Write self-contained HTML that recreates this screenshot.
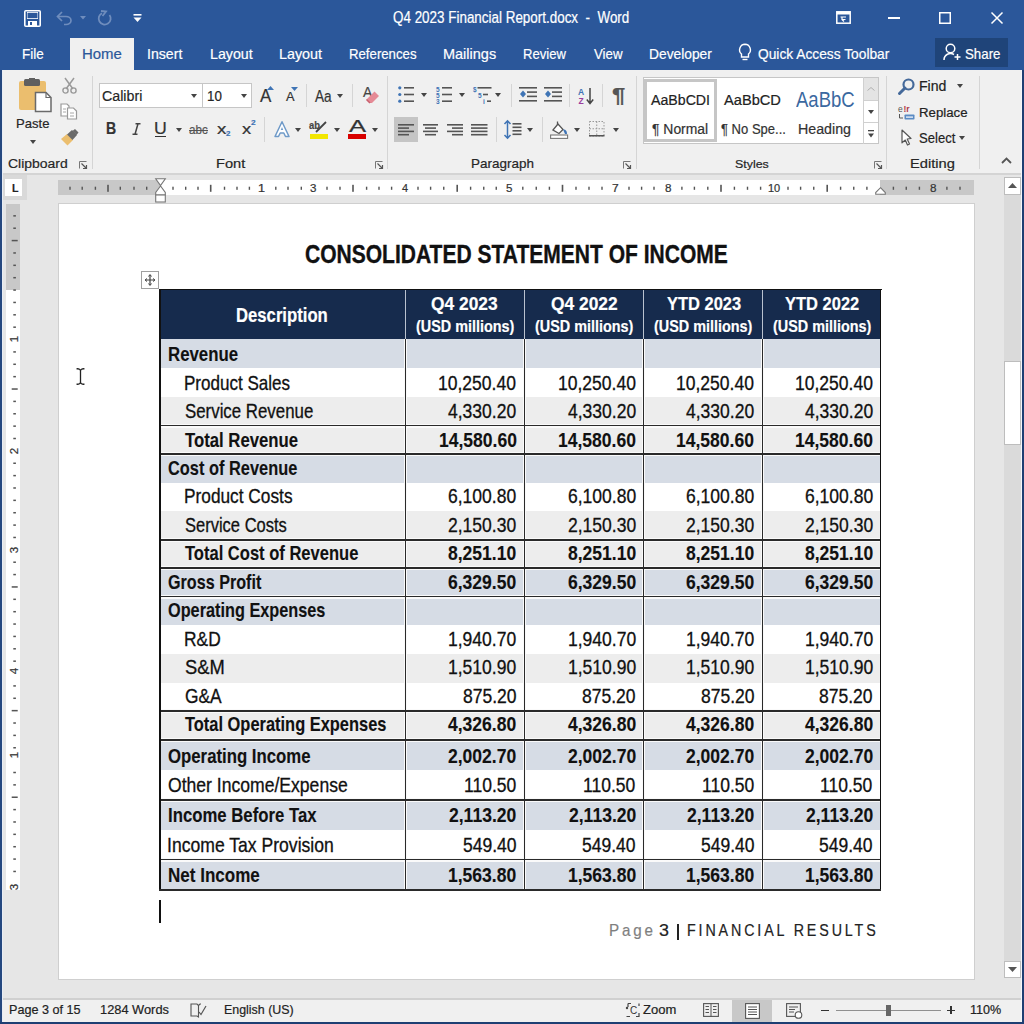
<!DOCTYPE html>
<html><head><meta charset="utf-8"><style>
html,body{margin:0;padding:0;}
body{width:1024px;height:1024px;overflow:hidden;position:relative;background:#E6E6E6;font-family:"Liberation Sans",sans-serif;}
.t{position:absolute;white-space:pre;line-height:0;transform-origin:0 0;-webkit-text-stroke-width:0.2px;}
svg{overflow:visible}
</style></head><body>
<div style="position:absolute;left:0px;top:0px;width:1024px;height:70px;background:#2B579A;"></div>
<div style="position:absolute;left:70px;top:38px;width:64px;height:33px;background:#F0F0F0;"></div>
<div style="position:absolute;left:935px;top:38px;width:73px;height:29px;background:#1F4479;"></div>
<div style="position:absolute;left:0px;top:70px;width:1024px;height:103px;background:#F0F0F0;"></div>
<div style="position:absolute;left:0px;top:173px;width:1024px;height:2px;background:#D4D4D4;"></div>
<div class="t" style="left:393.15px;top:18.23px;font-size:15.92px;font-weight:normal;color:#FFFFFF;transform:scaleX(0.8440);">Q4 2023 Financial Report.docx  -  Word</div>
<div class="t" style="left:21.92px;top:53.66px;font-size:15.41px;font-weight:normal;color:#FFFFFF;transform:scaleX(0.8742);">File</div>
<div class="t" style="left:147.48px;top:53.66px;font-size:15.41px;font-weight:normal;color:#FFFFFF;transform:scaleX(0.9162);">Insert</div>
<div class="t" style="left:209.76px;top:53.66px;font-size:15.41px;font-weight:normal;color:#FFFFFF;transform:scaleX(0.9218);">Layout</div>
<div class="t" style="left:279.25px;top:53.66px;font-size:15.41px;font-weight:normal;color:#FFFFFF;transform:scaleX(0.9307);">Layout</div>
<div class="t" style="left:348.94px;top:53.66px;font-size:15.41px;font-weight:normal;color:#FFFFFF;transform:scaleX(0.8568);">References</div>
<div class="t" style="left:442.54px;top:53.66px;font-size:15.41px;font-weight:normal;color:#FFFFFF;transform:scaleX(0.9403);">Mailings</div>
<div class="t" style="left:522.96px;top:53.66px;font-size:15.41px;font-weight:normal;color:#FFFFFF;transform:scaleX(0.8478);">Review</div>
<div class="t" style="left:593.83px;top:53.66px;font-size:15.41px;font-weight:normal;color:#FFFFFF;transform:scaleX(0.8624);">View</div>
<div class="t" style="left:649.40px;top:53.66px;font-size:15.41px;font-weight:normal;color:#FFFFFF;transform:scaleX(0.8950);">Developer</div>
<div class="t" style="left:758.28px;top:53.66px;font-size:15.41px;font-weight:normal;color:#FFFFFF;transform:scaleX(0.8935);">Quick Access Toolbar</div>
<div class="t" style="left:965.20px;top:53.66px;font-size:15.41px;font-weight:normal;color:#FFFFFF;transform:scaleX(0.8620);">Share</div>
<div class="t" style="left:81.80px;top:53.66px;font-size:15.41px;font-weight:normal;color:#2B579A;transform:scaleX(0.9710);">Home</div>
<svg style="position:absolute;left:24px;top:10px;" width="17" height="17" viewBox="0 0 17 17"><rect x="0.8" y="0.8" width="15.4" height="15.4" rx="1" fill="none" stroke="#fff" stroke-width="1.6"/><rect x="3" y="2" width="11" height="7" fill="#fff"/><rect x="3.5" y="2.8" width="10" height="5.4" fill="#2B579A"/><rect x="4" y="11" width="9" height="5" fill="#fff"/><rect x="6" y="12" width="2" height="3" fill="#2B579A"/></svg>
<svg style="position:absolute;left:56px;top:11px;" width="17" height="14" viewBox="0 0 17 14"><path d="M6 1 L1.5 5.5 L6 10" fill="none" stroke="#6F8DBD" stroke-width="1.7"/><path d="M2 5.5 H10 A5 4 0 0 1 10 13.5 H8" fill="none" stroke="#6F8DBD" stroke-width="1.7"/></svg>
<svg style="position:absolute;left:80px;top:16px;" width="6" height="4" viewBox="0 0 6 4"><path d="M0 0 H6 L3 3.5 Z" fill="#6F8DBD"/></svg>
<svg style="position:absolute;left:97px;top:11px;" width="16" height="15" viewBox="0 0 16 15"><path d="M12.5 4 A6 6 0 1 1 5 2.2" fill="none" stroke="#6F8DBD" stroke-width="1.8"/><path d="M4 0 L9 0.5 L5.5 5" fill="none" stroke="#6F8DBD" stroke-width="1.8"/></svg>
<svg style="position:absolute;left:133px;top:14px;" width="9" height="9" viewBox="0 0 9 9"><rect x="0.5" y="0" width="8" height="1.6" fill="#fff"/><path d="M0.5 3.5 H8.5 L4.5 8 Z" fill="#fff"/></svg>
<svg style="position:absolute;left:836px;top:11px;" width="15" height="13" viewBox="0 0 15 13"><rect x="0.8" y="0.8" width="13.4" height="11.4" fill="none" stroke="#fff" stroke-width="1.5"/><rect x="1" y="1" width="13" height="2.5" fill="#fff"/><path d="M4.5 6 H10 M6 6 V8.5 H9.5 M6 8.5 L8 10.5" stroke="#fff" stroke-width="1.2" fill="none"/></svg>
<div style="position:absolute;left:888px;top:17px;width:12px;height:2px;background:#FFFFFF;"></div>
<svg style="position:absolute;left:939px;top:12px;" width="12" height="12" viewBox="0 0 12 12"><rect x="0.75" y="0.75" width="10.5" height="10.5" fill="none" stroke="#fff" stroke-width="1.5"/></svg>
<svg style="position:absolute;left:991px;top:12px;" width="12" height="12" viewBox="0 0 12 12"><path d="M0.5 0.5 L11.5 11.5 M11.5 0.5 L0.5 11.5" stroke="#fff" stroke-width="1.5"/></svg>
<svg style="position:absolute;left:738px;top:43px;" width="14" height="19" viewBox="0 0 14 19"><path d="M7 1.2 A5.6 5.6 0 0 0 3.5 11 V14 H10.5 V11 A5.6 5.6 0 0 0 7 1.2 Z" fill="none" stroke="#fff" stroke-width="1.4"/><path d="M4.5 16.5 H9.5" stroke="#fff" stroke-width="1.4"/></svg>
<svg style="position:absolute;left:943px;top:43px;" width="19" height="18" viewBox="0 0 19 18"><circle cx="7.5" cy="5.5" r="4.3" fill="none" stroke="#fff" stroke-width="1.5"/><path d="M1 17 A6.5 6.5 0 0 1 11 11.5" fill="none" stroke="#fff" stroke-width="1.5"/><path d="M14.5 11 V17 M11.5 14 H17.5" stroke="#fff" stroke-width="1.5"/></svg>
<div style="position:absolute;left:92px;top:76px;width:1px;height:93px;background:#D5D5D5;"></div>
<div style="position:absolute;left:387px;top:76px;width:1px;height:93px;background:#D5D5D5;"></div>
<div style="position:absolute;left:636px;top:76px;width:1px;height:93px;background:#D5D5D5;"></div>
<div style="position:absolute;left:886px;top:76px;width:1px;height:93px;background:#D5D5D5;"></div>
<div style="position:absolute;left:979px;top:76px;width:1px;height:93px;background:#D5D5D5;"></div>
<div class="t" style="left:8.10px;top:163.96px;font-size:13.66px;font-weight:normal;color:#262626;transform:scaleX(1.0227);">Clipboard</div>
<div class="t" style="left:215.83px;top:164.06px;font-size:13.37px;font-weight:normal;color:#262626;transform:scaleX(1.0934);">Font</div>
<div class="t" style="left:470.92px;top:164.06px;font-size:13.37px;font-weight:normal;color:#262626;transform:scaleX(1.0081);">Paragraph</div>
<div class="t" style="left:734.64px;top:163.52px;font-size:11.77px;font-weight:normal;color:#262626;transform:scaleX(1.0533);">Styles</div>
<div class="t" style="left:910.42px;top:164.06px;font-size:13.37px;font-weight:normal;color:#262626;transform:scaleX(1.0999);">Editing</div>
<svg style="position:absolute;left:79px;top:161px;" width="8" height="8" viewBox="0 0 8 8"><path d="M0.5 7.5 V0.5 H7.5" fill="none" stroke="#777" stroke-width="1"/><path d="M2.5 2.5 L7 7 M4 7.5 H7.5 V4" fill="none" stroke="#555" stroke-width="1.2"/></svg>
<svg style="position:absolute;left:375px;top:161px;" width="8" height="8" viewBox="0 0 8 8"><path d="M0.5 7.5 V0.5 H7.5" fill="none" stroke="#777" stroke-width="1"/><path d="M2.5 2.5 L7 7 M4 7.5 H7.5 V4" fill="none" stroke="#555" stroke-width="1.2"/></svg>
<svg style="position:absolute;left:623px;top:161px;" width="8" height="8" viewBox="0 0 8 8"><path d="M0.5 7.5 V0.5 H7.5" fill="none" stroke="#777" stroke-width="1"/><path d="M2.5 2.5 L7 7 M4 7.5 H7.5 V4" fill="none" stroke="#555" stroke-width="1.2"/></svg>
<svg style="position:absolute;left:874px;top:161px;" width="8" height="8" viewBox="0 0 8 8"><path d="M0.5 7.5 V0.5 H7.5" fill="none" stroke="#777" stroke-width="1"/><path d="M2.5 2.5 L7 7 M4 7.5 H7.5 V4" fill="none" stroke="#555" stroke-width="1.2"/></svg>
<svg style="position:absolute;left:1001px;top:157px;" width="11" height="7" viewBox="0 0 11 7"><path d="M1 6 L5.5 1.5 L10 6" fill="none" stroke="#555" stroke-width="1.8"/></svg>
<svg style="position:absolute;left:19px;top:78px;" width="33" height="35" viewBox="0 0 33 35"><rect x="0" y="3" width="27" height="29" rx="2" fill="#EBBE6E"/>
<rect x="5" y="1" width="16" height="7" rx="1.5" fill="#5F5F5F"/><rect x="10" y="0" width="6" height="3" fill="#5F5F5F"/>
<path d="M16.5 14.5 H27 L32 19.5 V33.5 H16.5 Z" fill="#fff" stroke="#6A6A6A" stroke-width="1.5"/><path d="M27 14.5 V19.5 H32" fill="none" stroke="#6A6A6A" stroke-width="1.2"/></svg>
<div class="t" style="left:15.95px;top:124.36px;font-size:13.37px;font-weight:normal;color:#262626;transform:scaleX(0.9786);">Paste</div>
<svg style="position:absolute;left:29.700000000000003px;top:139.7px;" width="6" height="4" viewBox="0 0 6 4"><path d="M0 0 H6 L3.0 4 Z" fill="#444"/></svg>
<svg style="position:absolute;left:62px;top:77px;" width="15" height="17" viewBox="0 0 15 17"><path d="M3 1 L11 12 M12 1 L4 12" stroke="#9A9A9A" stroke-width="1.5"/><circle cx="3.5" cy="13.5" r="2.6" fill="none" stroke="#9A9A9A" stroke-width="1.4"/><circle cx="11.5" cy="13.5" r="2.6" fill="none" stroke="#9A9A9A" stroke-width="1.4"/></svg>
<svg style="position:absolute;left:60px;top:103px;" width="18" height="17" viewBox="0 0 18 17"><path d="M1 1 H7 L9 3 V13 H1 Z" fill="#fff" stroke="#9A9A9A" stroke-width="1.2"/><path d="M7.5 5 H13.5 L16.5 8 V16 H7.5 Z" fill="#fff" stroke="#9A9A9A" stroke-width="1.2"/><path d="M3 6 H6 M3 9 H6 M10 10 H14 M10 13 H14" stroke="#A8A8A8" stroke-width="1"/></svg>
<svg style="position:absolute;left:60px;top:129px;" width="19" height="17" viewBox="0 0 19 17"><path d="M1 10 L7 5 L13 11 L7.5 16.5 Z" fill="#EBBE6E"/><path d="M7 5.5 L12 1 L17 6 L12.5 11 Z" fill="#6A6A6A"/><path d="M12.5 2 L15 0 L18.5 3.5 L16.5 6" fill="#6A6A6A"/></svg>
<div style="position:absolute;left:99px;top:83px;width:153px;height:25px;background:#FFFFFF;box-sizing:border-box;border:1px solid #C6C6C6;"></div>
<div style="position:absolute;left:202px;top:83px;width:1px;height:25px;background:#C6C6C6;"></div>
<div class="t" style="left:102.29px;top:95.51px;font-size:15.26px;font-weight:normal;color:#262626;transform:scaleX(0.9340);">Calibri</div>
<svg style="position:absolute;left:191.3px;top:93.5px;" width="6" height="4" viewBox="0 0 6 4"><path d="M0 0 H6 L3.0 4 Z" fill="#444"/></svg>
<div class="t" style="left:206.59px;top:95.51px;font-size:15.26px;font-weight:normal;color:#262626;transform:scaleX(0.8780);">10</div>
<svg style="position:absolute;left:241.0px;top:93.5px;" width="6" height="4" viewBox="0 0 6 4"><path d="M0 0 H6 L3.0 4 Z" fill="#444"/></svg>
<div class="t" style="left:259.70px;top:95.50px;font-size:17.59px;font-weight:normal;color:#333;transform:scaleX(0.9662);">A</div>
<svg style="position:absolute;left:267px;top:86px;" width="7" height="4" viewBox="0 0 7 4"><path d="M0 4 L3.5 0 L7 4 Z" fill="#3F74B5"/></svg>
<div class="t" style="left:285.50px;top:97.27px;font-size:12.50px;font-weight:normal;color:#333;transform:scaleX(1.0226);">A</div>
<svg style="position:absolute;left:291px;top:86.5px;" width="7" height="4" viewBox="0 0 7 4"><path d="M0 0 H7 L3.5 4 Z" fill="#3F74B5"/></svg>
<div style="position:absolute;left:306px;top:84px;width:1px;height:23px;background:#D5D5D5;"></div>
<div class="t" style="left:315.00px;top:96.01px;font-size:16.13px;font-weight:normal;color:#333;transform:scaleX(0.8434);">Aa</div>
<svg style="position:absolute;left:337.0px;top:93.5px;" width="6" height="4" viewBox="0 0 6 4"><path d="M0 0 H6 L3.0 4 Z" fill="#444"/></svg>
<div style="position:absolute;left:352px;top:84px;width:1px;height:23px;background:#D5D5D5;"></div>
<div class="t" style="left:362.80px;top:92.21px;font-size:15.26px;font-weight:normal;color:#444;transform:scaleX(0.9065);">A</div>
<svg style="position:absolute;left:365px;top:90px;" width="15" height="14" viewBox="0 0 15 14"><path d="M5 13 L1.5 9.5 L9.5 1.5 L14 6 L7 13 Z" fill="#E58A96"/><path d="M1.5 9.5 L5 13" stroke="#C9606E" stroke-width="1.5"/></svg>
<div class="t" style="left:105.88px;top:128.86px;font-size:15.99px;font-weight:bold;color:#333;transform:scaleX(0.8818);">B</div>
<svg style="position:absolute;left:131.5px;top:123px;" width="9" height="12" viewBox="0 0 9 12"><path d="M3.5 0.8 H8.5 M0.5 11.2 H5.5 M6 0.8 L3 11.2" stroke="#444" stroke-width="1.5"/></svg>
<div class="t" style="left:153.97px;top:128.86px;font-size:15.99px;font-weight:normal;color:#333;transform:scaleX(1.1083);">U</div>
<div style="position:absolute;left:155px;top:135.5px;width:11px;height:1.5px;background:#333;"></div>
<svg style="position:absolute;left:175.7px;top:128px;" width="6" height="4" viewBox="0 0 6 4"><path d="M0 0 H6 L3.0 4 Z" fill="#444"/></svg>
<div class="t" style="left:189.24px;top:129.90px;font-size:12.97px;font-weight:normal;color:#555;transform:scaleX(0.8936);">abc</div>
<div style="position:absolute;left:189px;top:129.5px;width:19px;height:1.3000000000000114px;background:#555;"></div>
<div class="t" style="left:216.81px;top:129.21px;font-size:14.96px;font-weight:normal;color:#333;transform:scaleX(1.2532);">x</div>
<div class="t" style="left:226.22px;top:134.48px;font-size:7.27px;font-weight:bold;color:#3F74B5;transform:scaleX(1.0893);">2</div>
<div class="t" style="left:241.52px;top:129.21px;font-size:14.96px;font-weight:normal;color:#333;transform:scaleX(1.2253);">x</div>
<div class="t" style="left:250.71px;top:123.23px;font-size:7.99px;font-weight:bold;color:#3F74B5;transform:scaleX(1.0424);">2</div>
<div style="position:absolute;left:264px;top:117px;width:1px;height:25px;background:#D5D5D5;"></div>
<svg style="position:absolute;left:273.5px;top:121px;" width="16" height="16" viewBox="0 0 16 16"><path d="M1 15.5 L8 0.8 L15 15.5 H11.5 L9.8 12 H6.2 L4.5 15.5 Z" fill="#fff" stroke="#6F9AC8" stroke-width="1.5" stroke-linejoin="round"/><path d="M6.8 9 L8 6 L9.2 9 Z" fill="#6F9AC8"/></svg>
<svg style="position:absolute;left:295.0px;top:128px;" width="6" height="4" viewBox="0 0 6 4"><path d="M0 0 H6 L3.0 4 Z" fill="#444"/></svg>
<div class="t" style="left:309.42px;top:125.44px;font-size:11.72px;font-weight:bold;color:#444;transform:scaleX(0.8023);">ab</div>
<svg style="position:absolute;left:314px;top:121px;" width="14" height="12" viewBox="0 0 14 12"><path d="M2 11 L12 1" stroke="#444" stroke-width="1.8"/></svg>
<div style="position:absolute;left:309.5px;top:134px;width:18.5px;height:5px;background:#F2E600;"></div>
<svg style="position:absolute;left:334.0px;top:128px;" width="6" height="4" viewBox="0 0 6 4"><path d="M0 0 H6 L3.0 4 Z" fill="#444"/></svg>
<div class="t" style="left:348.50px;top:127.36px;font-size:15.70px;font-weight:normal;color:#333;transform:scaleX(1.6285);">A</div>
<div style="position:absolute;left:348px;top:134px;width:18px;height:5px;background:#D80000;"></div>
<svg style="position:absolute;left:372.3px;top:128px;" width="6" height="4" viewBox="0 0 6 4"><path d="M0 0 H6 L3.0 4 Z" fill="#444"/></svg>
<svg style="position:absolute;left:397.5px;top:86px;" width="17" height="17" viewBox="0 0 17 17"><circle cx="1.8" cy="1.8" r="1.6" fill="#3F74B5"/><circle cx="1.8" cy="8.5" r="1.6" fill="#3F74B5"/><circle cx="1.8" cy="15.2" r="1.6" fill="#3F74B5"/><rect x="6" y="1" width="10" height="1.6" fill="#555555"/><rect x="6" y="7.7" width="10" height="1.6" fill="#555555"/><rect x="6" y="14.4" width="10" height="1.6" fill="#555555"/></svg>
<svg style="position:absolute;left:421.0px;top:93px;" width="6" height="4" viewBox="0 0 6 4"><path d="M0 0 H6 L3.0 4 Z" fill="#444"/></svg>
<svg style="position:absolute;left:435.8px;top:86px;" width="17" height="18" viewBox="0 0 17 18"><text x="0" y="5.5" font-size="6.5" fill="#3F74B5" font-family="Liberation Sans" font-weight="bold">5</text><text x="0" y="12" font-size="6.5" fill="#3F74B5" font-family="Liberation Sans" font-weight="bold">5</text><text x="0" y="18" font-size="6.5" fill="#3F74B5" font-family="Liberation Sans" font-weight="bold">3</text><rect x="6" y="1" width="10" height="1.6" fill="#555555"/><rect x="6" y="7.7" width="10" height="1.6" fill="#555555"/><rect x="6" y="14.4" width="10" height="1.6" fill="#555555"/></svg>
<svg style="position:absolute;left:459.3px;top:93px;" width="6" height="4" viewBox="0 0 6 4"><path d="M0 0 H6 L3.0 4 Z" fill="#444"/></svg>
<svg style="position:absolute;left:472.5px;top:86px;" width="19" height="18" viewBox="0 0 19 18"><text x="0" y="5.5" font-size="6.5" fill="#3F74B5" font-family="Liberation Sans" font-weight="bold">$</text><text x="5" y="12" font-size="6.5" fill="#3F74B5" font-family="Liberation Sans" font-weight="bold">5</text><text x="10" y="18" font-size="6.5" fill="#3F74B5" font-family="Liberation Sans" font-weight="bold">i</text><rect x="4.5" y="1" width="14" height="1.6" fill="#555555"/><rect x="10" y="7.7" width="5" height="1.6" fill="#555555"/><rect x="14" y="14.4" width="4" height="1.6" fill="#555555"/></svg>
<svg style="position:absolute;left:495.3px;top:93px;" width="6" height="4" viewBox="0 0 6 4"><path d="M0 0 H6 L3.0 4 Z" fill="#444"/></svg>
<div style="position:absolute;left:510.5px;top:84px;width:1.0px;height:23px;background:#D5D5D5;"></div>
<svg style="position:absolute;left:518.5px;top:86.5px;" width="18" height="15" viewBox="0 0 18 15"><rect x="0" y="0" width="18" height="1.6" fill="#555555"/><rect x="8" y="4.3" width="10" height="1.6" fill="#555555"/><rect x="8" y="8.6" width="10" height="1.6" fill="#555555"/><rect x="0" y="13" width="18" height="1.6" fill="#555555"/><path d="M4 3.5 L7 7 L4 10.5 L1 7 Z" fill="#3F74B5"/></svg>
<svg style="position:absolute;left:543.5px;top:86.5px;" width="18" height="15" viewBox="0 0 18 15"><rect x="0" y="0" width="18" height="1.6" fill="#555555"/><rect x="8" y="4.3" width="10" height="1.6" fill="#555555"/><rect x="8" y="8.6" width="10" height="1.6" fill="#555555"/><rect x="0" y="13" width="18" height="1.6" fill="#555555"/><path d="M4 3.5 L7 7 L4 10.5 L1 7 Z" fill="#3F74B5"/></svg>
<div style="position:absolute;left:568.5px;top:84px;width:1.0px;height:23px;background:#D5D5D5;"></div>
<svg style="position:absolute;left:578px;top:86.5px;" width="16" height="18" viewBox="0 0 16 18"><text x="0" y="7.5" font-size="8.5" fill="#3F74B5" font-family="Liberation Sans" font-weight="bold">A</text><text x="0.5" y="17" font-size="8.5" fill="#9B3D9E" font-family="Liberation Sans" font-weight="bold">Z</text><path d="M12 1 V16 M8.8 12.5 L12 16.5 L15.2 12.5" fill="none" stroke="#444" stroke-width="1.5"/></svg>
<div style="position:absolute;left:601.5px;top:84px;width:1.0px;height:23px;background:#D5D5D5;"></div>
<div class="t" style="left:611.66px;top:95.25px;font-size:20.35px;font-weight:bold;color:#555;transform:scaleX(1.1734);">¶</div>
<div style="position:absolute;left:393.5px;top:117px;width:24.5px;height:25px;background:#C5C5C5;"></div>
<svg style="position:absolute;left:398px;top:124px;" width="16" height="11.5" viewBox="0 0 16 11.5"><rect x="0" y="0" width="16" height="1.6" fill="#555555"/><rect x="0" y="3.3" width="11" height="1.6" fill="#555555"/><rect x="0" y="6.6" width="16" height="1.6" fill="#555555"/><rect x="0" y="9.9" width="11" height="1.6" fill="#555555"/></svg>
<svg style="position:absolute;left:423.3px;top:124px;" width="15" height="11.5" viewBox="0 0 15 11.5"><rect x="0" y="0" width="15" height="1.6" fill="#555555"/><rect x="2" y="3.3" width="11" height="1.6" fill="#555555"/><rect x="0" y="6.6" width="15" height="1.6" fill="#555555"/><rect x="2" y="9.9" width="11" height="1.6" fill="#555555"/></svg>
<svg style="position:absolute;left:447.2px;top:124px;" width="16" height="11.5" viewBox="0 0 16 11.5"><rect x="0" y="0" width="16" height="1.6" fill="#555555"/><rect x="5" y="3.3" width="11" height="1.6" fill="#555555"/><rect x="0" y="6.6" width="16" height="1.6" fill="#555555"/><rect x="5" y="9.9" width="11" height="1.6" fill="#555555"/></svg>
<svg style="position:absolute;left:471px;top:124px;" width="16.5" height="11.5" viewBox="0 0 16.5 11.5"><rect x="0" y="0" width="16.5" height="1.6" fill="#555555"/><rect x="0" y="3.3" width="16.5" height="1.6" fill="#555555"/><rect x="0" y="6.6" width="16.5" height="1.6" fill="#555555"/><rect x="0" y="9.9" width="16.5" height="1.6" fill="#555555"/></svg>
<div style="position:absolute;left:495.5px;top:117px;width:1.0px;height:25px;background:#D5D5D5;"></div>
<svg style="position:absolute;left:503.5px;top:120px;" width="18" height="19" viewBox="0 0 18 19"><path d="M3.5 1 V18 M0.5 4 L3.5 0.8 L6.5 4 M0.5 15 L3.5 18.2 L6.5 15" fill="none" stroke="#3F74B5" stroke-width="1.5"/><rect x="8.5" y="3" width="9" height="1.6" fill="#555555"/><rect x="8.5" y="6.5" width="9" height="1.6" fill="#555555"/><rect x="8.5" y="10" width="9" height="1.6" fill="#555555"/><rect x="8.5" y="13.5" width="9" height="1.6" fill="#555555"/></svg>
<svg style="position:absolute;left:526.5px;top:128px;" width="6" height="4" viewBox="0 0 6 4"><path d="M0 0 H6 L3.0 4 Z" fill="#444"/></svg>
<div style="position:absolute;left:542px;top:117px;width:1px;height:25px;background:#D5D5D5;"></div>
<svg style="position:absolute;left:550px;top:120px;" width="18" height="19" viewBox="0 0 18 19"><path d="M3 10 L8 4 L13 9.5 L9 13.5 Z" fill="#fff" stroke="#555" stroke-width="1.3"/><path d="M7.5 5 V1.5" stroke="#555" stroke-width="1.3"/><path d="M13 9.5 Q17 9 17 14 L15 14 Z" fill="#3F74B5"/><rect x="0.6" y="15" width="17" height="3.4" fill="#fff" stroke="#777" stroke-width="1.1"/></svg>
<svg style="position:absolute;left:573.9px;top:128px;" width="6" height="4" viewBox="0 0 6 4"><path d="M0 0 H6 L3.0 4 Z" fill="#444"/></svg>
<svg style="position:absolute;left:589px;top:121px;" width="15.5" height="15.5" viewBox="0 0 15.5 15.5"><rect x="0.5" y="0.5" width="14.5" height="14.5" fill="none" stroke="#999" stroke-width="1" stroke-dasharray="1.5 1.5"/><path d="M7.75 0.5 V15 M0.5 7.75 H15" stroke="#999" stroke-width="1" stroke-dasharray="1.5 1.5"/><rect x="0" y="14" width="15.5" height="1.5" fill="#555"/></svg>
<svg style="position:absolute;left:612.6px;top:128px;" width="6" height="4" viewBox="0 0 6 4"><path d="M0 0 H6 L3.0 4 Z" fill="#444"/></svg>
<div style="position:absolute;left:643px;top:77px;width:236px;height:67px;background:#FFFFFF;box-sizing:border-box;border:1px solid #C6C6C6;"></div>
<div style="position:absolute;left:644px;top:79px;width:73px;height:63px;background:#FFFFFF;box-sizing:border-box;border:3.5px solid #C6C6C6;"></div>
<div class="t" style="left:651.30px;top:100.46px;font-size:14.83px;font-weight:normal;color:#222;transform:scaleX(0.9551);">AaBbCDI</div>
<div class="t" style="left:652.34px;top:128.61px;font-size:14.68px;font-weight:normal;color:#333;transform:scaleX(0.9481);">¶ Normal</div>
<div class="t" style="left:724.30px;top:100.46px;font-size:14.83px;font-weight:normal;color:#222;transform:scaleX(0.9859);">AaBbCD</div>
<div class="t" style="left:721.48px;top:128.61px;font-size:14.68px;font-weight:normal;color:#333;transform:scaleX(0.8877);">¶ No Spe...</div>
<div class="t" style="left:796.40px;top:100.37px;font-size:21.29px;font-weight:normal;color:#3A68A0;transform:scaleX(0.8702);-webkit-text-stroke-width:0;">AaBbC</div>
<div class="t" style="left:798.16px;top:128.51px;font-size:14.39px;font-weight:normal;color:#333;transform:scaleX(0.9900);">Heading</div>
<div style="position:absolute;left:862.5px;top:77px;width:1.0px;height:67px;background:#D0D0D0;"></div>
<div style="position:absolute;left:863.5px;top:78px;width:14.5px;height:22px;background:#E4E4E4;"></div>
<div style="position:absolute;left:863px;top:100px;width:15px;height:1px;background:#D0D0D0;"></div>
<div style="position:absolute;left:863px;top:122px;width:15px;height:1px;background:#D0D0D0;"></div>
<svg style="position:absolute;left:866.5px;top:87px;" width="8" height="4" viewBox="0 0 8 4"><path d="M0.5 3.5 L4 0.5 L7.5 3.5" fill="none" stroke="#B0B0B0" stroke-width="1"/></svg>
<svg style="position:absolute;left:867.5px;top:109.5px;" width="6" height="4" viewBox="0 0 6 4"><path d="M0 0 H6 L3.0 4 Z" fill="#444"/></svg>
<svg style="position:absolute;left:867.5px;top:129.5px;" width="6" height="8" viewBox="0 0 6 8"><rect x="0" y="0" width="6" height="1.3" fill="#444"/><path d="M0 3.5 H6 L3 7.5 Z" fill="#444"/></svg>
<svg style="position:absolute;left:897.5px;top:77.5px;" width="17" height="17" viewBox="0 0 17 17"><circle cx="10.5" cy="6.5" r="5" fill="none" stroke="#44699A" stroke-width="2.2"/><path d="M7 10 L1.5 15.5" stroke="#44699A" stroke-width="3" stroke-linecap="round"/></svg>
<div class="t" style="left:918.57px;top:86.36px;font-size:14.83px;font-weight:normal;color:#222;transform:scaleX(0.9518);">Find</div>
<svg style="position:absolute;left:957.0px;top:84px;" width="6" height="4" viewBox="0 0 6 4"><path d="M0 0 H6 L3.0 4 Z" fill="#444"/></svg>
<svg style="position:absolute;left:898px;top:105px;" width="17" height="15" viewBox="0 0 17 15"><text x="0" y="7" font-size="8.5" font-family="Liberation Sans" fill="#555">e</text><text x="5.5" y="7" font-size="8.5" font-family="Liberation Sans" font-weight="bold" fill="#B03A48">!r</text><path d="M1.5 9 V13 H5" fill="none" stroke="#555" stroke-width="1"/><rect x="6.5" y="9.5" width="10" height="5" rx="0.8" fill="#5B8BC4"/><rect x="8" y="11.5" width="7" height="1.2" fill="#fff"/></svg>
<div class="t" style="left:918.64px;top:112.71px;font-size:13.52px;font-weight:normal;color:#222;transform:scaleX(0.9787);">Replace</div>
<svg style="position:absolute;left:901px;top:129px;" width="11" height="17" viewBox="0 0 11 17"><path d="M1 1 L10 9.5 L6.2 10 L8.5 15 L6.5 16 L4.3 11 L1 13.8 Z" fill="#fff" stroke="#555" stroke-width="1.2" stroke-linejoin="round"/></svg>
<div class="t" style="left:918.66px;top:137.86px;font-size:14.24px;font-weight:normal;color:#222;transform:scaleX(0.9184);">Select</div>
<svg style="position:absolute;left:959.2px;top:135.5px;" width="6" height="4" viewBox="0 0 6 4"><path d="M0 0 H6 L3.0 4 Z" fill="#444"/></svg>
<div style="position:absolute;left:3px;top:175px;width:24px;height:25px;background:#D9D9D9;"></div>
<div style="position:absolute;left:5px;top:178.5px;width:17px;height:17.5px;background:#FFFFFF;"></div>
<div class="t" style="left:12.31px;top:187.97px;font-size:11.63px;font-weight:bold;color:#222;transform:scaleX(0.9184);">L</div>
<div style="position:absolute;left:58px;top:180px;width:916px;height:14.5px;background:#FFFFFF;"></div>
<div style="position:absolute;left:58px;top:180px;width:102px;height:14.5px;background:#C8C8C8;"></div>
<div style="position:absolute;left:880px;top:180px;width:94px;height:14.5px;background:#C8C8C8;"></div>
<svg style="position:absolute;left:58px;top:180px;" width="916" height="14.5" viewBox="0 0 916 14.5"><rect x="11.30" y="6.7" width="1.4" height="3.1" fill="#555"/><rect x="23.50" y="6.7" width="1.4" height="3.1" fill="#555"/><rect x="36.70" y="6.7" width="1.4" height="3.1" fill="#555"/><rect x="61.60" y="6.7" width="1.4" height="3.1" fill="#555"/><rect x="75.30" y="6.7" width="1.4" height="3.1" fill="#555"/><rect x="88.00" y="6.7" width="1.4" height="3.1" fill="#555"/><rect x="114.30" y="6.7" width="1.4" height="3.1" fill="#555"/><rect x="127.00" y="6.7" width="1.4" height="3.1" fill="#555"/><rect x="139.30" y="6.7" width="1.4" height="3.1" fill="#555"/><rect x="165.80" y="6.7" width="1.4" height="3.1" fill="#555"/><rect x="178.30" y="6.7" width="1.4" height="3.1" fill="#555"/><rect x="190.70" y="6.7" width="1.4" height="3.1" fill="#555"/><rect x="217.10" y="6.7" width="1.4" height="3.1" fill="#555"/><rect x="229.30" y="6.7" width="1.4" height="3.1" fill="#555"/><rect x="242.60" y="6.7" width="1.4" height="3.1" fill="#555"/><rect x="268.30" y="6.7" width="1.4" height="3.1" fill="#555"/><rect x="281.30" y="6.7" width="1.4" height="3.1" fill="#555"/><rect x="307.90" y="6.7" width="1.4" height="3.1" fill="#555"/><rect x="320.30" y="6.7" width="1.4" height="3.1" fill="#555"/><rect x="332.90" y="6.7" width="1.4" height="3.1" fill="#555"/><rect x="359.30" y="6.7" width="1.4" height="3.1" fill="#555"/><rect x="371.90" y="6.7" width="1.4" height="3.1" fill="#555"/><rect x="385.05" y="6.7" width="1.4" height="3.1" fill="#555"/><rect x="411.90" y="6.7" width="1.4" height="3.1" fill="#555"/><rect x="425.05" y="6.7" width="1.4" height="3.1" fill="#555"/><rect x="437.55" y="6.7" width="1.4" height="3.1" fill="#555"/><rect x="464.10" y="6.7" width="1.4" height="3.1" fill="#555"/><rect x="477.55" y="6.7" width="1.4" height="3.1" fill="#555"/><rect x="490.70" y="6.7" width="1.4" height="3.1" fill="#555"/><rect x="517.30" y="6.7" width="1.4" height="3.1" fill="#555"/><rect x="530.30" y="6.7" width="1.4" height="3.1" fill="#555"/><rect x="543.30" y="6.7" width="1.4" height="3.1" fill="#555"/><rect x="570.30" y="6.7" width="1.4" height="3.1" fill="#555"/><rect x="582.90" y="6.7" width="1.4" height="3.1" fill="#555"/><rect x="595.30" y="6.7" width="1.4" height="3.1" fill="#555"/><rect x="623.20" y="6.7" width="1.4" height="3.1" fill="#555"/><rect x="635.70" y="6.7" width="1.4" height="3.1" fill="#555"/><rect x="649.10" y="6.7" width="1.4" height="3.1" fill="#555"/><rect x="675.70" y="6.7" width="1.4" height="3.1" fill="#555"/><rect x="688.80" y="6.7" width="1.4" height="3.1" fill="#555"/><rect x="701.90" y="6.7" width="1.4" height="3.1" fill="#555"/><rect x="729.30" y="6.7" width="1.4" height="3.1" fill="#555"/><rect x="741.90" y="6.7" width="1.4" height="3.1" fill="#555"/><rect x="755.05" y="6.7" width="1.4" height="3.1" fill="#555"/><rect x="781.90" y="6.7" width="1.4" height="3.1" fill="#555"/><rect x="795.05" y="6.7" width="1.4" height="3.1" fill="#555"/><rect x="808.20" y="6.7" width="1.4" height="3.1" fill="#555"/><rect x="834.70" y="6.7" width="1.4" height="3.1" fill="#555"/><rect x="847.55" y="6.7" width="1.4" height="3.1" fill="#555"/><rect x="860.70" y="6.7" width="1.4" height="3.1" fill="#555"/><rect x="888.20" y="6.7" width="1.4" height="3.1" fill="#555"/><rect x="901.30" y="6.7" width="1.4" height="3.1" fill="#555"/><rect x="49.20" y="4.8" width="1.6" height="7" fill="#555"/><rect x="151.90" y="4.8" width="1.6" height="7" fill="#555"/><rect x="294.20" y="4.8" width="1.6" height="7" fill="#555"/><rect x="398.40" y="4.8" width="1.6" height="7" fill="#555"/><rect x="503.70" y="4.8" width="1.6" height="7" fill="#555"/><rect x="662.20" y="4.8" width="1.6" height="7" fill="#555"/><rect x="768.40" y="4.8" width="1.6" height="7" fill="#555"/></svg>
<div class="t" style="left:258.00px;top:187.67px;font-size:10.76px;font-weight:normal;color:#333;transform:scaleX(1.1755);">1</div>
<div class="t" style="left:310.09px;top:187.67px;font-size:10.76px;font-weight:normal;color:#333;transform:scaleX(1.0765);">3</div>
<div class="t" style="left:401.73px;top:187.67px;font-size:10.76px;font-weight:normal;color:#333;transform:scaleX(1.0126);">4</div>
<div class="t" style="left:506.49px;top:187.67px;font-size:10.76px;font-weight:normal;color:#333;transform:scaleX(1.0765);">5</div>
<div class="t" style="left:611.65px;top:187.67px;font-size:10.76px;font-weight:normal;color:#333;transform:scaleX(1.1238);">7</div>
<div class="t" style="left:665.12px;top:187.67px;font-size:10.76px;font-weight:normal;color:#333;transform:scaleX(1.0880);">8</div>
<div class="t" style="left:767.67px;top:187.67px;font-size:10.76px;font-weight:normal;color:#333;transform:scaleX(1.0227);">10</div>
<div class="t" style="left:930.12px;top:187.67px;font-size:10.76px;font-weight:normal;color:#333;transform:scaleX(1.0880);">8</div>
<svg style="position:absolute;left:155px;top:177.5px;" width="11" height="25" viewBox="0 0 11 25"><path d="M0.7 0.7 H10.3 L5.5 7.5 Z" fill="#fff" stroke="#777" stroke-width="1.1"/><path d="M5.5 8 L0.7 14.5 V17 H10.3 V14.5 Z" fill="#fff" stroke="#777" stroke-width="1.1"/><rect x="0.7" y="17" width="9.6" height="7" fill="#fff" stroke="#777" stroke-width="1.1"/></svg>
<svg style="position:absolute;left:874.5px;top:187px;" width="11" height="8" viewBox="0 0 11 8"><path d="M5.5 0.7 L10.3 5.5 V7.3 H0.7 V5.5 Z" fill="#fff" stroke="#777" stroke-width="1.1"/></svg>
<div style="position:absolute;left:6px;top:204px;width:14px;height:686px;background:#FFFFFF;"></div>
<div style="position:absolute;left:6px;top:204px;width:14px;height:86px;background:#C8C8C8;"></div>
<svg style="position:absolute;left:6px;top:204px;" width="15" height="686" viewBox="0 0 15 686"><rect x="7.30" y="11.10" width="2.6" height="1.5" fill="#555"/><rect x="7.30" y="23.47" width="2.6" height="1.5" fill="#555"/><rect x="5.70" y="35.84" width="6" height="1.5" fill="#555"/><rect x="7.30" y="48.21" width="2.6" height="1.5" fill="#555"/><rect x="7.30" y="60.58" width="2.6" height="1.5" fill="#555"/><rect x="7.30" y="72.95" width="2.6" height="1.5" fill="#555"/><rect x="7.30" y="85.32" width="2.6" height="1.5" fill="#555"/><rect x="7.30" y="97.69" width="2.6" height="1.5" fill="#555"/><rect x="7.30" y="110.06" width="2.6" height="1.5" fill="#555"/><rect x="7.30" y="122.43" width="2.6" height="1.5" fill="#555"/><rect x="7.30" y="147.17" width="2.6" height="1.5" fill="#555"/><rect x="7.30" y="159.54" width="2.6" height="1.5" fill="#555"/><rect x="7.30" y="171.91" width="2.6" height="1.5" fill="#555"/><rect x="5.70" y="184.28" width="6" height="1.5" fill="#555"/><rect x="7.30" y="196.65" width="2.6" height="1.5" fill="#555"/><rect x="7.30" y="209.02" width="2.6" height="1.5" fill="#555"/><rect x="7.30" y="221.39" width="2.6" height="1.5" fill="#555"/><rect x="7.30" y="233.76" width="2.6" height="1.5" fill="#555"/><rect x="7.30" y="258.50" width="2.6" height="1.5" fill="#555"/><rect x="7.30" y="270.87" width="2.6" height="1.5" fill="#555"/><rect x="7.30" y="283.24" width="2.6" height="1.5" fill="#555"/><rect x="7.30" y="295.61" width="2.6" height="1.5" fill="#555"/><rect x="7.30" y="307.98" width="2.6" height="1.5" fill="#555"/><rect x="7.30" y="320.35" width="2.6" height="1.5" fill="#555"/><rect x="7.30" y="332.72" width="2.6" height="1.5" fill="#555"/><rect x="7.30" y="357.46" width="2.6" height="1.5" fill="#555"/><rect x="7.30" y="369.83" width="2.6" height="1.5" fill="#555"/><rect x="5.70" y="382.20" width="6" height="1.5" fill="#555"/><rect x="7.30" y="394.57" width="2.6" height="1.5" fill="#555"/><rect x="7.30" y="406.94" width="2.6" height="1.5" fill="#555"/><rect x="7.30" y="419.31" width="2.6" height="1.5" fill="#555"/><rect x="7.30" y="431.68" width="2.6" height="1.5" fill="#555"/><rect x="7.30" y="444.05" width="2.6" height="1.5" fill="#555"/><rect x="7.30" y="456.42" width="2.6" height="1.5" fill="#555"/><rect x="7.30" y="481.16" width="2.6" height="1.5" fill="#555"/><rect x="7.30" y="493.53" width="2.6" height="1.5" fill="#555"/><rect x="5.70" y="505.90" width="6" height="1.5" fill="#555"/><rect x="7.30" y="518.27" width="2.6" height="1.5" fill="#555"/><rect x="7.30" y="530.64" width="2.6" height="1.5" fill="#555"/><rect x="7.30" y="543.01" width="2.6" height="1.5" fill="#555"/><rect x="7.30" y="567.75" width="2.6" height="1.5" fill="#555"/><rect x="7.30" y="580.12" width="2.6" height="1.5" fill="#555"/><rect x="5.70" y="592.49" width="6" height="1.5" fill="#555"/><rect x="7.30" y="604.86" width="2.6" height="1.5" fill="#555"/><rect x="7.30" y="617.23" width="2.6" height="1.5" fill="#555"/><rect x="7.30" y="629.60" width="2.6" height="1.5" fill="#555"/><rect x="7.30" y="641.97" width="2.6" height="1.5" fill="#555"/><rect x="7.30" y="654.34" width="2.6" height="1.5" fill="#555"/><rect x="7.30" y="666.71" width="2.6" height="1.5" fill="#555"/></svg>
<div class="t" style="left:8px;top:333px;width:12px;height:12px;font-size:11.5px;line-height:12px;text-align:center;color:#333;transform:rotate(-90deg);transform-origin:50% 50%;">1</div>
<div class="t" style="left:8px;top:444.6px;width:12px;height:12px;font-size:11.5px;line-height:12px;text-align:center;color:#333;transform:rotate(-90deg);transform-origin:50% 50%;">2</div>
<div class="t" style="left:8px;top:544px;width:12px;height:12px;font-size:11.5px;line-height:12px;text-align:center;color:#333;transform:rotate(-90deg);transform-origin:50% 50%;">3</div>
<div class="t" style="left:8px;top:665px;width:12px;height:12px;font-size:11.5px;line-height:12px;text-align:center;color:#333;transform:rotate(-90deg);transform-origin:50% 50%;">4</div>
<div class="t" style="left:8px;top:749px;width:12px;height:12px;font-size:11.5px;line-height:12px;text-align:center;color:#333;transform:rotate(-90deg);transform-origin:50% 50%;">1</div>
<div class="t" style="left:8px;top:880.7px;width:12px;height:12px;font-size:11.5px;line-height:12px;text-align:center;color:#333;transform:rotate(-90deg);transform-origin:50% 50%;">3</div>
<div style="position:absolute;left:58px;top:203px;width:917px;height:777px;background:#CFCFCF;"></div>
<div style="position:absolute;left:59px;top:204px;width:915px;height:775px;background:#FFFFFF;"></div>
<div style="position:absolute;left:1004px;top:195px;width:17px;height:766px;background:#DADADA;"></div>
<div style="position:absolute;left:1004px;top:177px;width:17px;height:18px;background:#FFFFFF;box-sizing:border-box;border:1px solid #BDBDBD;"></div>
<svg style="position:absolute;left:1008px;top:183px;" width="9" height="5" viewBox="0 0 9 5"><path d="M0 5 L4.5 0 L9 5 Z" fill="#555"/></svg>
<div style="position:absolute;left:1004px;top:961px;width:17px;height:17px;background:#FFFFFF;box-sizing:border-box;border:1px solid #BDBDBD;"></div>
<svg style="position:absolute;left:1008px;top:967px;" width="9" height="5" viewBox="0 0 9 5"><path d="M0 0 H9 L4.5 5 Z" fill="#555"/></svg>
<div style="position:absolute;left:1004px;top:361px;width:17px;height:84px;background:#FFFFFF;box-sizing:border-box;border:1px solid #BDBDBD;"></div>
<div style="position:absolute;left:1px;top:998px;width:1022px;height:2px;background:#D0D0D0;"></div>
<div style="position:absolute;left:1px;top:1000px;width:1022px;height:22px;background:#F0F0F0;"></div>
<div class="t" style="left:9.19px;top:1010.37px;font-size:12.79px;font-weight:normal;color:#222;transform:scaleX(0.9875);">Page 3 of 15</div>
<div class="t" style="left:100.04px;top:1010.37px;font-size:12.79px;font-weight:normal;color:#222;transform:scaleX(1.0038);">1284 Words</div>
<svg style="position:absolute;left:190px;top:1003px;" width="17" height="15" viewBox="0 0 17 15"><path d="M1 1 H7 L8.5 2.5 V14 L7 13 H1 Z M8.5 2.5 L10 1 H11" fill="none" stroke="#555" stroke-width="1.1"/><path d="M9 9 L11 11.5 L16 3" fill="none" stroke="#555" stroke-width="1.2"/></svg>
<div class="t" style="left:224.31px;top:1010.37px;font-size:12.79px;font-weight:normal;color:#222;transform:scaleX(0.9719);">English (US)</div>
<svg style="position:absolute;left:624.5px;top:1002px;" width="17" height="16" viewBox="0 0 17 16"><path d="M3 1.5 H6 M3 1.5 V5 M1.5 14.5 H5 M14 1.5 V4 M11 14.5 H14 V11" fill="none" stroke="#444" stroke-width="1.2"/><circle cx="2" cy="6" r="1.2" fill="#444"/><text x="5" y="12" font-size="10" font-family="Liberation Sans" fill="#333">C</text></svg>
<div class="t" style="left:643.11px;top:1010.37px;font-size:12.79px;font-weight:normal;color:#222;transform:scaleX(1.0181);">Zoom</div>
<svg style="position:absolute;left:703px;top:1003px;" width="16" height="14" viewBox="0 0 16 14"><rect x="0.6" y="0.6" width="14.8" height="12.8" fill="none" stroke="#555" stroke-width="1.1"/><path d="M8 0.6 V13.4 M2.5 3.5 H6 M2.5 6.5 H6 M2.5 9.5 H6 M10 3.5 H13.5 M10 6.5 H13.5 M10 9.5 H13.5" stroke="#555" stroke-width="1"/></svg>
<div style="position:absolute;left:732px;top:1000px;width:40px;height:22px;background:#C8C8C8;"></div>
<svg style="position:absolute;left:745px;top:1002.5px;" width="15" height="16" viewBox="0 0 15 16"><rect x="0.6" y="0.6" width="13.8" height="14.8" fill="#fff" stroke="#555" stroke-width="1.1"/><path d="M3 4 H12 M3 6.5 H12 M3 9 H12 M3 11.5 H12" stroke="#555" stroke-width="1"/></svg>
<svg style="position:absolute;left:786px;top:1002.5px;" width="17" height="16" viewBox="0 0 17 16"><rect x="0.6" y="0.6" width="13.8" height="12.8" fill="none" stroke="#555" stroke-width="1.1"/><path d="M3 4 H12 M3 6.5 H9 M3 9 H8" stroke="#555" stroke-width="1"/><circle cx="12.5" cy="12" r="3.3" fill="#fff" stroke="#555" stroke-width="1.1"/></svg>
<div style="position:absolute;left:821px;top:1009.5px;width:8px;height:1.5px;background:#333;"></div>
<div style="position:absolute;left:835.5px;top:1010px;width:105.5px;height:1px;background:#909090;"></div>
<div style="position:absolute;left:886px;top:1004.5px;width:5px;height:11.5px;background:#666;"></div>
<div style="position:absolute;left:947px;top:1009.5px;width:8px;height:1.5px;background:#333;"></div>
<div style="position:absolute;left:950.2px;top:1006.3px;width:1.599999999999909px;height:7.900000000000091px;background:#333;"></div>
<div class="t" style="left:969.86px;top:1010.37px;font-size:12.79px;font-weight:normal;color:#222;transform:scaleX(0.9843);">110%</div>
<div class="t" style="left:304.76px;top:254.03px;font-size:25.00px;font-weight:bold;color:#111;transform:scaleX(0.8409);-webkit-text-stroke:0.35px #111;">CONSOLIDATED STATEMENT OF INCOME</div>
<div style="position:absolute;left:141px;top:271px;width:18px;height:18px;background:#FFFFFF;box-sizing:border-box;border:1px solid #A0A0A0;"></div>
<svg style="position:absolute;left:143px;top:273px;" width="14" height="14" viewBox="0 0 14 14"><path d="M7 2 V12 M2.5 7 H11.5" stroke="#444" stroke-width="1.2"/><path d="M5.5 3.5 L7 1.5 L8.5 3.5 M5.5 10.5 L7 12.5 L8.5 10.5 M4 5.5 L2 7 L4 8.5 M10 5.5 L12 7 L10 8.5" fill="none" stroke="#444" stroke-width="1"/></svg>
<svg style="position:absolute;left:76px;top:368px;" width="9" height="17" viewBox="0 0 9 17"><path d="M0.5 0.8 Q4.5 0.5 4.5 3 V14 Q4.5 16.5 0.5 16.2 M8.5 0.8 Q4.5 0.5 4.5 3 M4.5 14 Q4.5 16.5 8.5 16.2" fill="none" stroke="#222" stroke-width="1.3"/></svg>
<div style="position:absolute;left:159.3px;top:900px;width:1.799999999999983px;height:23.399999999999977px;background:#111;"></div>
<div style="position:absolute;left:160px;top:289px;width:721px;height:50px;background:#162B4D;"></div>
<div style="position:absolute;left:160px;top:339px;width:721px;height:29px;background:#D6DCE5;"></div>
<div style="position:absolute;left:160px;top:368px;width:721px;height:29px;background:#FFFFFF;"></div>
<div style="position:absolute;left:160px;top:397px;width:721px;height:28.69999999999999px;background:#EDEDED;"></div>
<div style="position:absolute;left:160px;top:425.7px;width:721px;height:28.5px;background:#EDEDED;"></div>
<div style="position:absolute;left:160px;top:454.2px;width:721px;height:28.5px;background:#D6DCE5;"></div>
<div style="position:absolute;left:160px;top:482.7px;width:721px;height:28.5px;background:#FFFFFF;"></div>
<div style="position:absolute;left:160px;top:511.2px;width:721px;height:28.69999999999999px;background:#EDEDED;"></div>
<div style="position:absolute;left:160px;top:539.9px;width:721px;height:28.200000000000045px;background:#EDEDED;"></div>
<div style="position:absolute;left:160px;top:568.1px;width:721px;height:28.600000000000023px;background:#D6DCE5;"></div>
<div style="position:absolute;left:160px;top:596.7px;width:721px;height:28.299999999999955px;background:#D6DCE5;"></div>
<div style="position:absolute;left:160px;top:625px;width:721px;height:29px;background:#FFFFFF;"></div>
<div style="position:absolute;left:160px;top:654px;width:721px;height:28.5px;background:#EDEDED;"></div>
<div style="position:absolute;left:160px;top:682.5px;width:721px;height:28.600000000000023px;background:#FFFFFF;"></div>
<div style="position:absolute;left:160px;top:711.1px;width:721px;height:28.899999999999977px;background:#EDEDED;"></div>
<div style="position:absolute;left:160px;top:740px;width:721px;height:29.799999999999955px;background:#D6DCE5;"></div>
<div style="position:absolute;left:160px;top:769.8px;width:721px;height:30.100000000000023px;background:#FFFFFF;"></div>
<div style="position:absolute;left:160px;top:799.9px;width:721px;height:29.899999999999977px;background:#D6DCE5;"></div>
<div style="position:absolute;left:160px;top:829.8px;width:721px;height:29.700000000000045px;background:#FFFFFF;"></div>
<div style="position:absolute;left:160px;top:859.5px;width:721px;height:30.0px;background:#D6DCE5;"></div>
<div style="position:absolute;left:160px;top:423.7px;width:721px;height:4.0px;background:#FAFAFA;"></div>
<div style="position:absolute;left:160px;top:452.2px;width:721px;height:4.0px;background:#FAFAFA;"></div>
<div style="position:absolute;left:160px;top:537.9px;width:721px;height:4.0px;background:#FAFAFA;"></div>
<div style="position:absolute;left:160px;top:566.1px;width:721px;height:4.0px;background:#FAFAFA;"></div>
<div style="position:absolute;left:160px;top:594.7px;width:721px;height:4.0px;background:#FAFAFA;"></div>
<div style="position:absolute;left:160px;top:709.1px;width:721px;height:4.0px;background:#FAFAFA;"></div>
<div style="position:absolute;left:160px;top:738px;width:721px;height:4px;background:#FAFAFA;"></div>
<div style="position:absolute;left:160px;top:797.9px;width:721px;height:4.0px;background:#FAFAFA;"></div>
<div style="position:absolute;left:160px;top:857.5px;width:721px;height:4.0px;background:#FAFAFA;"></div>
<div style="position:absolute;left:403.79999999999995px;top:339px;width:3.5px;height:550px;background:#FAFAFA;"></div>
<div style="position:absolute;left:522.9px;top:339px;width:3.5px;height:550px;background:#FAFAFA;"></div>
<div style="position:absolute;left:641.9px;top:339px;width:3.5px;height:550px;background:#FAFAFA;"></div>
<div style="position:absolute;left:760.9px;top:339px;width:3.5px;height:550px;background:#FAFAFA;"></div>
<div style="position:absolute;left:160px;top:424.9px;width:721px;height:1.6000000000000227px;background:#2A2A2A;"></div>
<div style="position:absolute;left:160px;top:453.4px;width:721px;height:1.6000000000000227px;background:#2A2A2A;"></div>
<div style="position:absolute;left:160px;top:539.1px;width:721px;height:1.599999999999909px;background:#2A2A2A;"></div>
<div style="position:absolute;left:160px;top:567.3000000000001px;width:721px;height:1.599999999999909px;background:#2A2A2A;"></div>
<div style="position:absolute;left:160px;top:595.9000000000001px;width:721px;height:1.599999999999909px;background:#2A2A2A;"></div>
<div style="position:absolute;left:160px;top:710.3000000000001px;width:721px;height:1.599999999999909px;background:#2A2A2A;"></div>
<div style="position:absolute;left:160px;top:739.2px;width:721px;height:1.599999999999909px;background:#2A2A2A;"></div>
<div style="position:absolute;left:160px;top:799.1px;width:721px;height:1.599999999999909px;background:#2A2A2A;"></div>
<div style="position:absolute;left:160px;top:858.7px;width:721px;height:1.599999999999909px;background:#2A2A2A;"></div>
<div style="position:absolute;left:404.79999999999995px;top:339px;width:1.5px;height:550px;background:#2A2A2A;"></div>
<div style="position:absolute;left:404.9px;top:289px;width:1.3000000000000114px;height:50px;background:#B9C2CF;"></div>
<div style="position:absolute;left:523.9px;top:339px;width:1.5px;height:550px;background:#2A2A2A;"></div>
<div style="position:absolute;left:524.0px;top:289px;width:1.2999999999999545px;height:50px;background:#B9C2CF;"></div>
<div style="position:absolute;left:642.9px;top:339px;width:1.5px;height:550px;background:#2A2A2A;"></div>
<div style="position:absolute;left:643.0px;top:289px;width:1.2999999999999545px;height:50px;background:#B9C2CF;"></div>
<div style="position:absolute;left:761.9px;top:339px;width:1.5px;height:550px;background:#2A2A2A;"></div>
<div style="position:absolute;left:762.0px;top:289px;width:1.2999999999999545px;height:50px;background:#B9C2CF;"></div>
<div style="position:absolute;left:159.4px;top:288.5px;width:1.5999999999999943px;height:602.3px;background:#111;"></div>
<div style="position:absolute;left:879.5px;top:288.5px;width:1.5px;height:601.5px;background:#111;"></div>
<div style="position:absolute;left:159px;top:288.5px;width:723px;height:1.0px;background:#111;"></div>
<div style="position:absolute;left:159.4px;top:889px;width:721.6px;height:1.7999999999999545px;background:#2A2A2A;"></div>
<div class="t" style="left:167.71px;top:354.15px;font-size:19.62px;font-weight:bold;color:#111;transform:scaleX(0.8575);-webkit-text-stroke:0.12px #111;">Revenue</div>
<div class="t" style="left:184.14px;top:382.60px;font-size:19.62px;font-weight:normal;color:#111;transform:scaleX(0.8691);-webkit-text-stroke:0.3px #111;">Product Sales</div>
<div class="t" style="left:438.49px;top:382.60px;font-size:19.62px;font-weight:normal;color:#111;transform:scaleX(0.8935);-webkit-text-stroke:0.3px #111;">10,250.40</div>
<div class="t" style="left:557.79px;top:382.60px;font-size:19.62px;font-weight:normal;color:#111;transform:scaleX(0.8935);-webkit-text-stroke:0.3px #111;">10,250.40</div>
<div class="t" style="left:676.19px;top:382.60px;font-size:19.62px;font-weight:normal;color:#111;transform:scaleX(0.8935);-webkit-text-stroke:0.3px #111;">10,250.40</div>
<div class="t" style="left:794.69px;top:382.60px;font-size:19.62px;font-weight:normal;color:#111;transform:scaleX(0.8935);-webkit-text-stroke:0.3px #111;">10,250.40</div>
<div class="t" style="left:184.74px;top:411.05px;font-size:19.62px;font-weight:normal;color:#111;transform:scaleX(0.8588);-webkit-text-stroke:0.3px #111;">Service Revenue</div>
<div class="t" style="left:448.31px;top:411.05px;font-size:19.62px;font-weight:normal;color:#111;transform:scaleX(0.8935);-webkit-text-stroke:0.3px #111;">4,330.20</div>
<div class="t" style="left:567.61px;top:411.05px;font-size:19.62px;font-weight:normal;color:#111;transform:scaleX(0.8935);-webkit-text-stroke:0.3px #111;">4,330.20</div>
<div class="t" style="left:686.01px;top:411.05px;font-size:19.62px;font-weight:normal;color:#111;transform:scaleX(0.8935);-webkit-text-stroke:0.3px #111;">4,330.20</div>
<div class="t" style="left:804.51px;top:411.05px;font-size:19.62px;font-weight:normal;color:#111;transform:scaleX(0.8935);-webkit-text-stroke:0.3px #111;">4,330.20</div>
<div class="t" style="left:185.33px;top:439.50px;font-size:19.62px;font-weight:bold;color:#111;transform:scaleX(0.8531);-webkit-text-stroke:0.12px #111;">Total Revenue</div>
<div class="t" style="left:438.58px;top:439.50px;font-size:19.62px;font-weight:bold;color:#111;transform:scaleX(0.8935);-webkit-text-stroke:0.12px #111;">14,580.60</div>
<div class="t" style="left:557.88px;top:439.50px;font-size:19.62px;font-weight:bold;color:#111;transform:scaleX(0.8935);-webkit-text-stroke:0.12px #111;">14,580.60</div>
<div class="t" style="left:676.28px;top:439.50px;font-size:19.62px;font-weight:bold;color:#111;transform:scaleX(0.8935);-webkit-text-stroke:0.12px #111;">14,580.60</div>
<div class="t" style="left:794.78px;top:439.50px;font-size:19.62px;font-weight:bold;color:#111;transform:scaleX(0.8935);-webkit-text-stroke:0.12px #111;">14,580.60</div>
<div class="t" style="left:168.14px;top:467.95px;font-size:19.62px;font-weight:bold;color:#111;transform:scaleX(0.8354);-webkit-text-stroke:0.12px #111;">Cost of Revenue</div>
<div class="t" style="left:184.12px;top:496.40px;font-size:19.62px;font-weight:normal;color:#111;transform:scaleX(0.8812);-webkit-text-stroke:0.3px #111;">Product Costs</div>
<div class="t" style="left:448.31px;top:496.40px;font-size:19.62px;font-weight:normal;color:#111;transform:scaleX(0.8935);-webkit-text-stroke:0.3px #111;">6,100.80</div>
<div class="t" style="left:567.61px;top:496.40px;font-size:19.62px;font-weight:normal;color:#111;transform:scaleX(0.8935);-webkit-text-stroke:0.3px #111;">6,100.80</div>
<div class="t" style="left:686.01px;top:496.40px;font-size:19.62px;font-weight:normal;color:#111;transform:scaleX(0.8935);-webkit-text-stroke:0.3px #111;">6,100.80</div>
<div class="t" style="left:804.51px;top:496.40px;font-size:19.62px;font-weight:normal;color:#111;transform:scaleX(0.8935);-webkit-text-stroke:0.3px #111;">6,100.80</div>
<div class="t" style="left:184.76px;top:524.85px;font-size:19.62px;font-weight:normal;color:#111;transform:scaleX(0.8419);-webkit-text-stroke:0.3px #111;">Service Costs</div>
<div class="t" style="left:448.31px;top:524.85px;font-size:19.62px;font-weight:normal;color:#111;transform:scaleX(0.8935);-webkit-text-stroke:0.3px #111;">2,150.30</div>
<div class="t" style="left:567.61px;top:524.85px;font-size:19.62px;font-weight:normal;color:#111;transform:scaleX(0.8935);-webkit-text-stroke:0.3px #111;">2,150.30</div>
<div class="t" style="left:686.01px;top:524.85px;font-size:19.62px;font-weight:normal;color:#111;transform:scaleX(0.8935);-webkit-text-stroke:0.3px #111;">2,150.30</div>
<div class="t" style="left:804.51px;top:524.85px;font-size:19.62px;font-weight:normal;color:#111;transform:scaleX(0.8935);-webkit-text-stroke:0.3px #111;">2,150.30</div>
<div class="t" style="left:185.33px;top:553.30px;font-size:19.62px;font-weight:bold;color:#111;transform:scaleX(0.8434);-webkit-text-stroke:0.12px #111;">Total Cost of Revenue</div>
<div class="t" style="left:448.40px;top:553.30px;font-size:19.62px;font-weight:bold;color:#111;transform:scaleX(0.8935);-webkit-text-stroke:0.12px #111;">8,251.10</div>
<div class="t" style="left:567.70px;top:553.30px;font-size:19.62px;font-weight:bold;color:#111;transform:scaleX(0.8935);-webkit-text-stroke:0.12px #111;">8,251.10</div>
<div class="t" style="left:686.10px;top:553.30px;font-size:19.62px;font-weight:bold;color:#111;transform:scaleX(0.8935);-webkit-text-stroke:0.12px #111;">8,251.10</div>
<div class="t" style="left:804.60px;top:553.30px;font-size:19.62px;font-weight:bold;color:#111;transform:scaleX(0.8935);-webkit-text-stroke:0.12px #111;">8,251.10</div>
<div class="t" style="left:168.15px;top:581.75px;font-size:19.62px;font-weight:bold;color:#111;transform:scaleX(0.8234);-webkit-text-stroke:0.12px #111;">Gross Profit</div>
<div class="t" style="left:448.40px;top:581.75px;font-size:19.62px;font-weight:bold;color:#111;transform:scaleX(0.8935);-webkit-text-stroke:0.12px #111;">6,329.50</div>
<div class="t" style="left:567.70px;top:581.75px;font-size:19.62px;font-weight:bold;color:#111;transform:scaleX(0.8935);-webkit-text-stroke:0.12px #111;">6,329.50</div>
<div class="t" style="left:686.10px;top:581.75px;font-size:19.62px;font-weight:bold;color:#111;transform:scaleX(0.8935);-webkit-text-stroke:0.12px #111;">6,329.50</div>
<div class="t" style="left:804.60px;top:581.75px;font-size:19.62px;font-weight:bold;color:#111;transform:scaleX(0.8935);-webkit-text-stroke:0.12px #111;">6,329.50</div>
<div class="t" style="left:168.15px;top:610.20px;font-size:19.62px;font-weight:bold;color:#111;transform:scaleX(0.8301);-webkit-text-stroke:0.12px #111;">Operating Expenses</div>
<div class="t" style="left:184.11px;top:638.65px;font-size:19.62px;font-weight:normal;color:#111;transform:scaleX(0.8858);-webkit-text-stroke:0.3px #111;">R&amp;D</div>
<div class="t" style="left:448.31px;top:638.65px;font-size:19.62px;font-weight:normal;color:#111;transform:scaleX(0.8935);-webkit-text-stroke:0.3px #111;">1,940.70</div>
<div class="t" style="left:567.61px;top:638.65px;font-size:19.62px;font-weight:normal;color:#111;transform:scaleX(0.8935);-webkit-text-stroke:0.3px #111;">1,940.70</div>
<div class="t" style="left:686.01px;top:638.65px;font-size:19.62px;font-weight:normal;color:#111;transform:scaleX(0.8935);-webkit-text-stroke:0.3px #111;">1,940.70</div>
<div class="t" style="left:804.51px;top:638.65px;font-size:19.62px;font-weight:normal;color:#111;transform:scaleX(0.8935);-webkit-text-stroke:0.3px #111;">1,940.70</div>
<div class="t" style="left:184.68px;top:667.10px;font-size:19.62px;font-weight:normal;color:#111;transform:scaleX(0.9343);-webkit-text-stroke:0.3px #111;">S&amp;M</div>
<div class="t" style="left:448.31px;top:667.10px;font-size:19.62px;font-weight:normal;color:#111;transform:scaleX(0.8935);-webkit-text-stroke:0.3px #111;">1,510.90</div>
<div class="t" style="left:567.61px;top:667.10px;font-size:19.62px;font-weight:normal;color:#111;transform:scaleX(0.8935);-webkit-text-stroke:0.3px #111;">1,510.90</div>
<div class="t" style="left:686.01px;top:667.10px;font-size:19.62px;font-weight:normal;color:#111;transform:scaleX(0.8935);-webkit-text-stroke:0.3px #111;">1,510.90</div>
<div class="t" style="left:804.51px;top:667.10px;font-size:19.62px;font-weight:normal;color:#111;transform:scaleX(0.8935);-webkit-text-stroke:0.3px #111;">1,510.90</div>
<div class="t" style="left:184.63px;top:695.55px;font-size:19.62px;font-weight:normal;color:#111;transform:scaleX(0.8857);-webkit-text-stroke:0.3px #111;">G&amp;A</div>
<div class="t" style="left:462.86px;top:695.55px;font-size:19.62px;font-weight:normal;color:#111;transform:scaleX(0.8935);-webkit-text-stroke:0.3px #111;">875.20</div>
<div class="t" style="left:582.16px;top:695.55px;font-size:19.62px;font-weight:normal;color:#111;transform:scaleX(0.8935);-webkit-text-stroke:0.3px #111;">875.20</div>
<div class="t" style="left:700.56px;top:695.55px;font-size:19.62px;font-weight:normal;color:#111;transform:scaleX(0.8935);-webkit-text-stroke:0.3px #111;">875.20</div>
<div class="t" style="left:819.06px;top:695.55px;font-size:19.62px;font-weight:normal;color:#111;transform:scaleX(0.8935);-webkit-text-stroke:0.3px #111;">875.20</div>
<div class="t" style="left:185.34px;top:724.00px;font-size:19.62px;font-weight:bold;color:#111;transform:scaleX(0.8377);-webkit-text-stroke:0.12px #111;">Total Operating Expenses</div>
<div class="t" style="left:448.40px;top:724.00px;font-size:19.62px;font-weight:bold;color:#111;transform:scaleX(0.8935);-webkit-text-stroke:0.12px #111;">4,326.80</div>
<div class="t" style="left:567.70px;top:724.00px;font-size:19.62px;font-weight:bold;color:#111;transform:scaleX(0.8935);-webkit-text-stroke:0.12px #111;">4,326.80</div>
<div class="t" style="left:686.10px;top:724.00px;font-size:19.62px;font-weight:bold;color:#111;transform:scaleX(0.8935);-webkit-text-stroke:0.12px #111;">4,326.80</div>
<div class="t" style="left:804.60px;top:724.00px;font-size:19.62px;font-weight:bold;color:#111;transform:scaleX(0.8935);-webkit-text-stroke:0.12px #111;">4,326.80</div>
<div class="t" style="left:168.13px;top:755.50px;font-size:19.62px;font-weight:bold;color:#111;transform:scaleX(0.8553);-webkit-text-stroke:0.12px #111;">Operating Income</div>
<div class="t" style="left:448.40px;top:755.50px;font-size:19.62px;font-weight:bold;color:#111;transform:scaleX(0.8935);-webkit-text-stroke:0.12px #111;">2,002.70</div>
<div class="t" style="left:567.70px;top:755.50px;font-size:19.62px;font-weight:bold;color:#111;transform:scaleX(0.8935);-webkit-text-stroke:0.12px #111;">2,002.70</div>
<div class="t" style="left:686.10px;top:755.50px;font-size:19.62px;font-weight:bold;color:#111;transform:scaleX(0.8935);-webkit-text-stroke:0.12px #111;">2,002.70</div>
<div class="t" style="left:804.60px;top:755.50px;font-size:19.62px;font-weight:bold;color:#111;transform:scaleX(0.8935);-webkit-text-stroke:0.12px #111;">2,002.70</div>
<div class="t" style="left:168.01px;top:785.25px;font-size:19.62px;font-weight:normal;color:#111;transform:scaleX(0.8961);-webkit-text-stroke:0.3px #111;">Other Income/Expense</div>
<div class="t" style="left:464.18px;top:785.25px;font-size:19.62px;font-weight:normal;color:#111;transform:scaleX(0.8935);-webkit-text-stroke:0.3px #111;">110.50</div>
<div class="t" style="left:583.48px;top:785.25px;font-size:19.62px;font-weight:normal;color:#111;transform:scaleX(0.8935);-webkit-text-stroke:0.3px #111;">110.50</div>
<div class="t" style="left:701.88px;top:785.25px;font-size:19.62px;font-weight:normal;color:#111;transform:scaleX(0.8935);-webkit-text-stroke:0.3px #111;">110.50</div>
<div class="t" style="left:820.38px;top:785.25px;font-size:19.62px;font-weight:normal;color:#111;transform:scaleX(0.8935);-webkit-text-stroke:0.3px #111;">110.50</div>
<div class="t" style="left:167.71px;top:815.00px;font-size:19.62px;font-weight:bold;color:#111;transform:scaleX(0.8536);-webkit-text-stroke:0.12px #111;">Income Before Tax</div>
<div class="t" style="left:449.36px;top:815.00px;font-size:19.62px;font-weight:bold;color:#111;transform:scaleX(0.8935);-webkit-text-stroke:0.12px #111;">2,113.20</div>
<div class="t" style="left:568.66px;top:815.00px;font-size:19.62px;font-weight:bold;color:#111;transform:scaleX(0.8935);-webkit-text-stroke:0.12px #111;">2,113.20</div>
<div class="t" style="left:687.06px;top:815.00px;font-size:19.62px;font-weight:bold;color:#111;transform:scaleX(0.8935);-webkit-text-stroke:0.12px #111;">2,113.20</div>
<div class="t" style="left:805.56px;top:815.00px;font-size:19.62px;font-weight:bold;color:#111;transform:scaleX(0.8935);-webkit-text-stroke:0.12px #111;">2,113.20</div>
<div class="t" style="left:167.22px;top:844.75px;font-size:19.62px;font-weight:normal;color:#111;transform:scaleX(0.8969);-webkit-text-stroke:0.3px #111;">Income Tax Provision</div>
<div class="t" style="left:462.86px;top:844.75px;font-size:19.62px;font-weight:normal;color:#111;transform:scaleX(0.8935);-webkit-text-stroke:0.3px #111;">549.40</div>
<div class="t" style="left:582.16px;top:844.75px;font-size:19.62px;font-weight:normal;color:#111;transform:scaleX(0.8935);-webkit-text-stroke:0.3px #111;">549.40</div>
<div class="t" style="left:700.56px;top:844.75px;font-size:19.62px;font-weight:normal;color:#111;transform:scaleX(0.8935);-webkit-text-stroke:0.3px #111;">549.40</div>
<div class="t" style="left:819.06px;top:844.75px;font-size:19.62px;font-weight:normal;color:#111;transform:scaleX(0.8935);-webkit-text-stroke:0.3px #111;">549.40</div>
<div class="t" style="left:167.69px;top:874.50px;font-size:19.62px;font-weight:bold;color:#111;transform:scaleX(0.8680);-webkit-text-stroke:0.12px #111;">Net Income</div>
<div class="t" style="left:448.40px;top:874.50px;font-size:19.62px;font-weight:bold;color:#111;transform:scaleX(0.8935);-webkit-text-stroke:0.12px #111;">1,563.80</div>
<div class="t" style="left:567.70px;top:874.50px;font-size:19.62px;font-weight:bold;color:#111;transform:scaleX(0.8935);-webkit-text-stroke:0.12px #111;">1,563.80</div>
<div class="t" style="left:686.10px;top:874.50px;font-size:19.62px;font-weight:bold;color:#111;transform:scaleX(0.8935);-webkit-text-stroke:0.12px #111;">1,563.80</div>
<div class="t" style="left:804.60px;top:874.50px;font-size:19.62px;font-weight:bold;color:#111;transform:scaleX(0.8935);-webkit-text-stroke:0.12px #111;">1,563.80</div>
<div class="t" style="left:236.42px;top:314.55px;font-size:19.48px;font-weight:bold;color:#FFFFFF;transform:scaleX(0.8568);">Description</div>
<div class="t" style="left:431.31px;top:303.90px;font-size:18.75px;font-weight:bold;color:#FFFFFF;transform:scaleX(0.9262);">Q4 2023</div>
<div class="t" style="left:416.23px;top:326.40px;font-size:16.14px;font-weight:bold;color:#FFFFFF;transform:scaleX(0.8925);">(USD millions)</div>
<div class="t" style="left:551.15px;top:303.90px;font-size:18.75px;font-weight:bold;color:#FFFFFF;transform:scaleX(0.9275);">Q4 2022</div>
<div class="t" style="left:535.28px;top:326.40px;font-size:16.14px;font-weight:bold;color:#FFFFFF;transform:scaleX(0.8925);">(USD millions)</div>
<div class="t" style="left:666.57px;top:303.90px;font-size:18.75px;font-weight:bold;color:#FFFFFF;transform:scaleX(0.8783);">YTD 2023</div>
<div class="t" style="left:654.28px;top:326.40px;font-size:16.14px;font-weight:bold;color:#FFFFFF;transform:scaleX(0.8925);">(USD millions)</div>
<div class="t" style="left:785.32px;top:303.90px;font-size:18.75px;font-weight:bold;color:#FFFFFF;transform:scaleX(0.8793);">YTD 2022</div>
<div class="t" style="left:773.03px;top:326.40px;font-size:16.14px;font-weight:bold;color:#FFFFFF;transform:scaleX(0.8925);">(USD millions)</div>
<div class="t" style="left:608.99px;top:931.06px;font-size:15.99px;font-weight:normal;color:#7F7F7F;transform:scaleX(0.9496);letter-spacing:3px;-webkit-text-stroke:0.2px #7F7F7F;">Page</div>
<div class="t" style="left:659.08px;top:931.06px;font-size:15.99px;font-weight:normal;color:#222;transform:scaleX(1.1192);-webkit-text-stroke:0.2px #222;">3</div>
<div style="position:absolute;left:677px;top:923.5px;width:1.7999999999999545px;height:16.0px;background:#222;"></div>
<div class="t" style="left:687.16px;top:931.06px;font-size:15.99px;font-weight:normal;color:#222;transform:scaleX(0.8939);letter-spacing:3.2px;-webkit-text-stroke:0.2px #222;">FINANCIAL RESULTS</div>
<div style="position:absolute;left:0px;top:70px;width:2.4px;height:954px;background:#25487F;"></div>
<div style="position:absolute;left:2.4px;top:70px;width:0.8000000000000003px;height:952px;background:#E8EDF5;"></div>
<div style="position:absolute;left:1021.4px;top:70px;width:1.0px;height:952px;background:#F4F6FA;"></div>
<div style="position:absolute;left:1022.4px;top:70px;width:1.6000000000000227px;height:954px;background:#1E3F73;"></div>
<div style="position:absolute;left:0px;top:1022.4px;width:1024px;height:1.6000000000000227px;background:#1E3F73;"></div>
</body></html>
